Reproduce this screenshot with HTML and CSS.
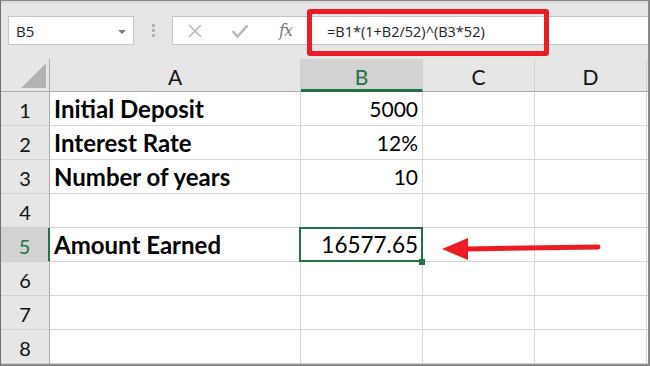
FILE: index.html
```html
<!DOCTYPE html>
<html lang="en">
<head>
    <meta charset="UTF-8">
    <meta name="viewport" content="width=device-width, initial-scale=1.0">
    <title>Compound Interest</title>
    <link rel="stylesheet" href="styles.css">
</head>
<body>
    <main class="window">
        <div class="formula-bar">
            <div class="name-box">
                <span>B5</span>
                <span class="caret"></span>
            </div>
            <div class="grip">
                <span></span><span></span><span></span>
            </div>
            <div class="formula-box">
                <div class="fx-buttons">
                    <svg class="icon" width="16" height="16" viewBox="0 0 16 16">
                        <path d="M2 2 L14 14 M14 2 L2 14" stroke="#b9b9b9" stroke-width="1.6" fill="none"/>
                    </svg>
                    <svg class="icon" width="18" height="16" viewBox="0 0 18 16">
                        <path d="M1.5 8 L6.5 13.5 L16.5 2.5" stroke="#b9b9b9" stroke-width="2.6" fill="none"/>
                    </svg>
                    <span class="fx">fx</span>
                </div>
                <div class="formula">=B1*(1+B2/52)^(B3*52)</div>
            </div>
        </div>

        <div class="sheet">
            <div class="corner"><span class="tri"></span></div>
            <div class="col-head">A</div>
            <div class="col-head active">B</div>
            <div class="col-head">C</div>
            <div class="col-head">D</div>
            <div class="col-head end"></div>

            <div class="row-head">1</div>
            <div class="cell label">Initial Deposit</div>
            <div class="cell num">5000</div>
            <div class="cell"></div><div class="cell"></div><div class="cell end"></div>

            <div class="row-head">2</div>
            <div class="cell label">Interest Rate</div>
            <div class="cell num">12%</div>
            <div class="cell"></div><div class="cell"></div><div class="cell end"></div>

            <div class="row-head">3</div>
            <div class="cell label">Number of years</div>
            <div class="cell num">10</div>
            <div class="cell"></div><div class="cell"></div><div class="cell end"></div>

            <div class="row-head">4</div>
            <div class="cell"></div>
            <div class="cell"></div>
            <div class="cell"></div><div class="cell"></div><div class="cell end"></div>

            <div class="row-head active">5</div>
            <div class="cell label">Amount Earned</div>
            <div class="cell num selected">16577.65<span class="handle"></span></div>
            <div class="cell"></div><div class="cell"></div><div class="cell end"></div>

            <div class="row-head">6</div>
            <div class="cell"></div><div class="cell"></div>
            <div class="cell"></div><div class="cell"></div><div class="cell end"></div>

            <div class="row-head">7</div>
            <div class="cell"></div><div class="cell"></div>
            <div class="cell"></div><div class="cell"></div><div class="cell end"></div>

            <div class="row-head">8</div>
            <div class="cell"></div><div class="cell"></div>
            <div class="cell"></div><div class="cell"></div><div class="cell end"></div>
        </div>

        <!-- annotations -->
        <div class="highlight"></div>
        <svg class="arrow" width="166" height="30" viewBox="0 0 166 30">
            <path d="M2 13 L28 2 L28 24 Z" fill="#ed1c24"/>
            <path d="M26 13 L158 11" stroke="#ed1c24" stroke-width="5" stroke-linecap="round"/>
        </svg>
    </main>
</body>
</html>
```

FILE: styles.css
```css
* {
    margin: 0;
    padding: 0;
    box-sizing: border-box;
}

body {
    background: #fff;
    font-family: Lato, "Open Sans", sans-serif;
    color: #000;
}

.window {
    position: relative;
    width: 650px;
    height: 366px;
    border-top: 1px solid #8a8a8a;
    border-left: 1px solid #5f7566;
    border-right: 2px solid #8a8a8a;
    border-bottom: 2px solid #8a8a8a;
    overflow: hidden;
}

/* formula bar */
.formula-bar {
    height: 58px;
    background: linear-gradient(#d9d9d9, #e6e6e6 4px);
    display: flex;
    align-items: center;
    padding: 1px 0 0 7px;
}

.name-box {
    width: 126px;
    height: 29px;
    background: #fff;
    border: 1px solid #c6c6c6;
    display: flex;
    align-items: center;
    justify-content: space-between;
    padding: 1px 7px 0 7px;
    font-family: "Open Sans", sans-serif;
    font-size: 15px;
    color: #222;
}

.caret {
    width: 0;
    height: 0;
    border-left: 4px solid transparent;
    border-right: 4px solid transparent;
    border-top: 4px solid #7a7a7a;
    margin-top: 1px;
}

.grip {
    width: 38px;
    display: flex;
    flex-direction: column;
    align-items: center;
    gap: 2px;
}

.grip span {
    width: 3px;
    height: 3px;
    background: #b3b3b3;
}

.formula-box {
    flex: 1;
    height: 29px;
    background: #fff;
    border: 1px solid #c6c6c6;
    border-right: none;
    display: flex;
    align-items: center;
}

.fx-buttons {
    display: flex;
    align-items: center;
    width: 135px;
    padding-left: 14px;
    gap: 28px;
}

.icon {
    display: block;
}

.fx {
    font-family: "DejaVu Serif", serif;
    font-style: italic;
    font-size: 16px;
    color: #777;
    letter-spacing: -1px;
    padding-left: 2px;
}

.formula {
    font-family: "Open Sans", sans-serif;
    font-size: 14.5px;
    color: #222;
    padding: 2px 0 0 19px;
}

/* grid */
.sheet {
    display: grid;
    grid-template-columns: 49px 251px 122px 112px 112px 1fr;
    grid-template-rows: 33px repeat(8, 34px);
}

.corner {
    background: #e6e6e6;
    border-right: 1px solid #ababab;
    border-bottom: 1px solid #ababab;
    position: relative;
}

.tri {
    position: absolute;
    right: 3px;
    bottom: 3px;
    width: 0;
    height: 0;
    border-left: 25px solid transparent;
    border-bottom: 25px solid #b4b4b4;
}

.col-head {
    background: #e6e6e6;
    border-right: 1px solid #cfcfcf;
    border-bottom: 1px solid #ababab;
    display: flex;
    align-items: center;
    justify-content: center;
    font-size: 21px;
    padding-top: 2px;
    color: #111;
}

.col-head.active {
    background: #d2d2d2;
    color: #217346;
    border-bottom: 3px solid #217346;
    padding-top: 4px;
}

.col-head.end {
    border-right: none;
}

.row-head {
    background: #e6e6e6;
    border-right: 1px solid #ababab;
    border-bottom: 1px solid #cfcfcf;
    display: flex;
    align-items: center;
    justify-content: center;
    font-size: 20px;
    padding-top: 3px;
    color: #111;
}

.row-head.active {
    background: #d2d2d2;
    color: #217346;
    border-right: 2px solid #217346;
}

.cell {
    border-right: 1px solid #d4d4d4;
    border-bottom: 1px solid #d4d4d4;
    display: flex;
    align-items: flex-end;
    padding: 0 4px 4px 4px;
    font-size: 21px;
    white-space: nowrap;
}

.cell.end {
    border-right: none;
}

.label {
    font-weight: 700;
    font-size: 24px;
    padding-bottom: 2px;
}

.num {
    justify-content: flex-end;
}

.selected {
    position: relative;
    font-size: 22.5px;
    padding-bottom: 3px;
}

.selected::after {
    content: "";
    position: absolute;
    left: -2px;
    top: -1px;
    right: -1px;
    bottom: -1px;
    border: 2px solid #217346;
}

.handle {
    position: absolute;
    right: -3px;
    bottom: -4px;
    width: 6px;
    height: 6px;
    background: #217346;
    z-index: 1;
}

/* annotations */
.highlight {
    position: absolute;
    left: 306px;
    top: 8px;
    width: 242px;
    height: 47px;
    border: 5px solid #ed1c24;
    border-radius: 3px;
}

.arrow {
    position: absolute;
    left: 439px;
    top: 235px;
}
```
